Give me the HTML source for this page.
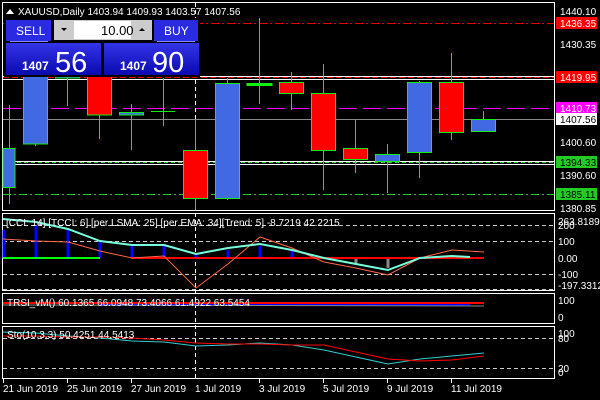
<!DOCTYPE html>
<html><head><style>
body{margin:0;background:#000;width:600px;height:400px;overflow:hidden;font-family:"Liberation Sans",sans-serif;}
svg{position:absolute;left:0;top:0}
text{font-family:"Liberation Sans",sans-serif;font-size:10px;fill:#fff}
</style></head><body>
<svg width="600" height="400" viewBox="0 0 600 400">
<!-- frames -->
<g fill="none" stroke="#fff" stroke-width="1">
<rect x="2.5" y="2.5" width="552" height="208"/>
<rect x="2.5" y="213.5" width="552" height="77"/>
<rect x="2.5" y="293.5" width="552" height="30"/>
<rect x="2.5" y="326.5" width="552" height="52"/>
</g>
<!-- horizontal levels -->
<line x1="3" y1="23.5" x2="554" y2="23.5" stroke="#e00" stroke-dasharray="8,3,2,3"/>
<line x1="3" y1="76.5" x2="554" y2="76.5" stroke="#fff"/>
<line x1="3" y1="77.5" x2="554" y2="77.5" stroke="#e00" stroke-dasharray="6,3"/>
<line x1="3" y1="79.5" x2="554" y2="79.5" stroke="#fff"/>
<line x1="3" y1="108.5" x2="554" y2="108.5" stroke="#f0f" stroke-dasharray="18,6"/>
<line x1="3" y1="119.5" x2="554" y2="119.5" stroke="#888"/>
<line x1="3" y1="161.5" x2="554" y2="161.5" stroke="#fff"/>
<line x1="3" y1="162.5" x2="554" y2="162.5" stroke="#3c3" stroke-dasharray="4,3"/>
<line x1="3" y1="164.5" x2="554" y2="164.5" stroke="#fff"/>
<line x1="3" y1="194.5" x2="554" y2="194.5" stroke="#2c2" stroke-dasharray="8,3,2,3"/>
<line x1="195.5" y1="3" x2="195.5" y2="380" stroke="#fff" stroke-dasharray="4,3"/>
<!-- candles -->
<g stroke="#1e1" stroke-width="1">
<line x1="9.5" y1="105" x2="9.5" y2="204"/><rect x="3" y="148.5" width="12" height="39" fill="#4169e1"/>
<line x1="35.5" y1="60" x2="35.5" y2="146"/><rect x="23.5" y="60" width="24" height="84" fill="#4169e1"/>
<line x1="67.5" y1="60" x2="67.5" y2="106"/><rect x="55.5" y="60" width="24" height="18" fill="#4169e1"/>
<line x1="99.5" y1="60" x2="99.5" y2="139"/><rect x="87.5" y="60" width="24" height="55" fill="#f00"/>
<line x1="131.5" y1="104" x2="131.5" y2="150"/><rect x="119.5" y="112.5" width="24" height="2.5" fill="#4169e1"/>
<line x1="163.5" y1="78" x2="163.5" y2="126"/><line x1="151" y1="111.5" x2="175" y2="111.5"/>
<line x1="195.5" y1="120" x2="195.5" y2="210"/><rect x="183.5" y="150.5" width="24" height="48" fill="#f00"/>
<line x1="227.5" y1="78" x2="227.5" y2="200"/><rect x="215.5" y="83.5" width="24" height="115" fill="#4169e1"/>
<line x1="259.5" y1="18" x2="259.5" y2="104"/><rect x="247" y="83.5" width="25" height="2" fill="#1e1"/>
<line x1="291.5" y1="72" x2="291.5" y2="110"/><rect x="279.5" y="82.5" width="24" height="11" fill="#f00"/>
<line x1="323.5" y1="64" x2="323.5" y2="190"/><rect x="311.5" y="93.5" width="24" height="57" fill="#f00"/>
<line x1="355.5" y1="120" x2="355.5" y2="173"/><rect x="343.5" y="148.5" width="24" height="11" fill="#f00"/>
<line x1="387.5" y1="144" x2="387.5" y2="193"/><rect x="375.5" y="154.5" width="24" height="7" fill="#4169e1"/>
<line x1="419.5" y1="81" x2="419.5" y2="178"/><rect x="407.5" y="82.5" width="24" height="70" fill="#4169e1"/>
<line x1="451.5" y1="53" x2="451.5" y2="140"/><rect x="439.5" y="82.5" width="24" height="50" fill="#f00"/>
<line x1="483.5" y1="111" x2="483.5" y2="132"/><rect x="471.5" y="119.5" width="24" height="12" fill="#4169e1"/>
</g>
<!-- right axis -->
<g>
<text x="560" y="15">1440.10</text>
<rect x="556" y="17" width="41" height="12" fill="#f00"/><text x="560" y="27">1436.35</text>
<text x="560" y="48">1430.35</text>
<rect x="556" y="71" width="41" height="12" fill="#f00"/><text x="560" y="81">1419.95</text>
<rect x="556" y="102" width="41" height="12" fill="#f0f"/><text x="560" y="112">1410.73</text>
<rect x="556" y="113" width="41" height="12" fill="#fff"/><text x="560" y="123" style="fill:#000">1407.56</text>
<text x="560" y="146">1400.60</text>
<rect x="556" y="156" width="41" height="12" fill="#2c2"/><text x="560" y="166" style="fill:#000">1394.33</text>
<text x="560" y="179">1390.60</text>
<rect x="556" y="188" width="41" height="12" fill="#2c2"/><text x="560" y="198" style="fill:#000">1385.11</text>
<text x="560" y="212">1380.85</text>
<text x="558" y="225">263.8189</text>
<text x="558" y="229">200</text>
<text x="558" y="245">100</text>
<text x="558" y="262">0.00</text>
<text x="558" y="278">-100</text>
<text x="558" y="289">-197.3312</text>
<text x="558" y="304">100</text>
<text x="558" y="321">0</text>
<text x="558" y="337">100</text>
<text x="558" y="342">80</text>
<text x="558" y="372">20</text>
<text x="558" y="376">0</text>
</g>
<!-- panel 1 -->
<g stroke="#ccc" stroke-dasharray="4,3">
<line x1="3" y1="225.5" x2="554" y2="225.5"/><line x1="3" y1="241.5" x2="554" y2="241.5"/>
<line x1="3" y1="274.5" x2="554" y2="274.5"/><line x1="3" y1="289.5" x2="554" y2="289.5"/>
<line x1="3" y1="338.5" x2="554" y2="338.5"/><line x1="3" y1="368.5" x2="554" y2="368.5"/>
</g>
<g stroke="#00f" stroke-width="3">
<line x1="4" y1="230" x2="4" y2="258"/><line x1="36" y1="225" x2="36" y2="258"/><line x1="68" y1="230" x2="68" y2="258"/>
<line x1="100" y1="241" x2="100" y2="258"/><line x1="132" y1="246" x2="132" y2="258"/><line x1="164" y1="246" x2="164" y2="258"/>
<line x1="196" y1="254" x2="196" y2="258"/><line x1="228" y1="250" x2="228" y2="258"/><line x1="260" y1="246" x2="260" y2="258"/><line x1="292" y1="250" x2="292" y2="258"/>
</g>
<g stroke="#888" stroke-width="3"><line x1="356" y1="258" x2="356" y2="263"/><line x1="388" y1="258" x2="388" y2="268"/></g>
<line x1="3" y1="258" x2="100" y2="258" stroke="#0f0" stroke-width="2"/>
<line x1="131" y1="258" x2="484" y2="258" stroke="#f00" stroke-width="2"/>
<polyline fill="none" stroke="#f64" stroke-width="1" points="3,239 36,241 68,242 100,251 132,258 164,256 196,288 228,264 260,237 292,248 324,262 356,268 388,275 420,258 452,250 484,252"/>
<polyline fill="none" stroke="#7fd" stroke-width="2" points="3,219 36,222 68,229 100,241 132,245 164,245 196,254 228,248 260,244 292,250 324,258 356,264 388,270 420,258 452,256 470,257"/>
<text x="6" y="226">[CCI: 14] [TCCI: 6] [per LSMA: 25] [per EMA: 34][Trend: 5] -8.7219 42.2215</text>
<!-- panel 2 -->
<line x1="3" y1="303" x2="484" y2="303" stroke="#f00" stroke-width="2"/>
<line x1="100" y1="305" x2="470" y2="305" stroke="#00f" stroke-width="2"/>
<line x1="3" y1="305" x2="484" y2="306" stroke="#888" stroke-width="1"/>
<text x="7" y="306">TRSI_vM() 60.1365 66.0948 73.4066 61.4922 63.5454</text>
<!-- panel 3 -->
<polyline fill="none" stroke="#3cc" points="3,332 36,333 68,336 100,338 132,341 164,342 196,346 228,345 260,343 292,345 324,350 356,357 388,364 420,359 452,356 484,353"/>
<polyline fill="none" stroke="#f00" points="3,336 36,336 68,337 100,337 132,338 164,340 196,343 228,344 260,344 292,345 324,345 356,352 388,359 420,361 452,360 484,356"/>
<text x="7" y="338">Sto(10,3,3) 50.4251 44.5413</text>
<!-- time axis -->
<g stroke="#fff"><line x1="3.5" y1="379" x2="3.5" y2="383"/><line x1="67.5" y1="379" x2="67.5" y2="383"/><line x1="131.5" y1="379" x2="131.5" y2="383"/><line x1="259.5" y1="379" x2="259.5" y2="383"/><line x1="323.5" y1="379" x2="323.5" y2="383"/><line x1="387.5" y1="379" x2="387.5" y2="383"/><line x1="451.5" y1="379" x2="451.5" y2="383"/></g>
<text x="3" y="392">21 Jun 2019</text><text x="67" y="392">25 Jun 2019</text><text x="131" y="392">27 Jun 2019</text><text x="195" y="392">1 Jul 2019</text><text x="259" y="392">3 Jul 2019</text><text x="323" y="392">5 Jul 2019</text><text x="387" y="392">9 Jul 2019</text><text x="451" y="392">11 Jul 2019</text>
<!-- title -->
<path d="M6,14 L10,9 L14,14 Z" fill="#fff"/>
<text x="18" y="15">XAUUSD,Daily  1403.94 1409.93 1403.57 1407.56</text>
<!-- trade panel -->
<rect x="4" y="18" width="196" height="59" fill="#000"/>
<rect x="6" y="20" width="45" height="21" fill="#2a2ae0"/>
<line x1="10" y1="41.5" x2="48" y2="41.5" stroke="#88f"/>
<text x="16" y="35" style="font-size:12px">SELL</text>
<rect x="54" y="20" width="98" height="20" fill="#ccc"/>
<rect x="74" y="21" width="57" height="18" fill="#fff"/>
<path d="M61,28 L67,28 L64,31 Z" fill="#000"/><path d="M139,31 L145,31 L142,28 Z" fill="#000"/>
<text x="101" y="35" style="font-size:13px;fill:#000">10.00</text>
<rect x="154" y="20" width="44" height="21" fill="#2a2ae0"/>
<line x1="157" y1="41.5" x2="195" y2="41.5" stroke="#88f"/>
<text x="164" y="35" style="font-size:12px">BUY</text>
<defs><linearGradient id="g" x1="0" y1="0" x2="0" y2="1"><stop offset="0" stop-color="#3434e8"/><stop offset="1" stop-color="#0a0ab0"/></linearGradient></defs>
<rect x="6" y="43" width="95" height="32" fill="url(#g)"/>
<rect x="104" y="43" width="95" height="32" fill="url(#g)"/>
<text x="22" y="70" style="font-size:12px;font-weight:bold">1407</text>
<text x="55" y="72" style="font-size:29px">56</text>
<text x="120" y="70" style="font-size:12px;font-weight:bold">1407</text>
<text x="152" y="72" style="font-size:29px">90</text>
</svg>
</body></html>
